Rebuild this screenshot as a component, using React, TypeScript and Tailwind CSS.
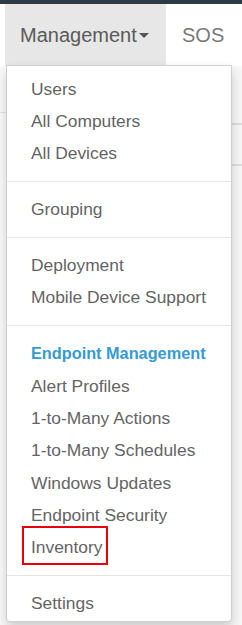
import React from 'react';

type Entry = { label: string; kind?: 'item' | 'header' | 'divider'; marked?: boolean };

const menu: Entry[] = [
  { label: 'Users' },
  { label: 'All Computers' },
  { label: 'All Devices' },
  { label: '', kind: 'divider' },
  { label: 'Grouping' },
  { label: '', kind: 'divider' },
  { label: 'Deployment' },
  { label: 'Mobile Device Support' },
  { label: '', kind: 'divider' },
  { label: 'Endpoint Management', kind: 'header' },
  { label: 'Alert Profiles' },
  { label: '1-to-Many Actions' },
  { label: '1-to-Many Schedules' },
  { label: 'Windows Updates' },
  { label: 'Endpoint Security' },
  { label: 'Inventory', marked: true },
  { label: '', kind: 'divider' },
  { label: 'Settings' },
];

const Caret = () => (
  <svg width="10" height="6" viewBox="0 0 10 6" className="ml-[2px] mt-[2px]">
    <path d="M0 0 L10 0 L5 5 Z" fill="#555" />
  </svg>
);

export default function App() {
  return (
    <div className="relative h-[625px] w-[242px] overflow-hidden bg-white font-['Liberation_Sans',Arial,sans-serif]">
      {/* top strip */}
      <div className="h-[4px] bg-[#2c3a46]" />

      {/* navbar */}
      <div className="flex h-[62px] bg-white">
        <div className="w-[5px]" />
        <div className="flex w-[161px] items-center bg-[#e7e7e7] pl-[15px] text-[20px] text-[#5a5a5a]">
          Management
          <Caret />
        </div>
        <div className="flex items-center pl-[16px] text-[20px] text-[#7a7a7a]">SOS</div>
      </div>

      {/* page content behind the menu */}
      <div className="flex h-[559px]">
        <div className="w-[120px] bg-[#fafafa]">
          <div className="h-[47px] border-b border-[#e3e3e3]" />
        </div>
        <div className="flex-1 bg-[#f7f7f7] pt-[4px]">
          <div className="h-[55px] border-b-2 border-[#dedede]" />
          <div className="h-[41px] border-b-2 border-[#dedede]" />
        </div>
      </div>

      {/* dropdown */}
      <div className="absolute left-[6px] top-[65px] h-[557px] w-[226px] rounded-b-[4px] border border-[#cfcfcf] bg-white pt-[6.5px] shadow-[0_6px_12px_rgba(0,0,0,0.18)]">
        {menu.map((m, i) => {
          if (m.kind === 'divider') {
            return <div key={i} className="my-[11.2px] h-px bg-[#e5e5e5]" />;
          }
          return (
            <div
              key={i}
              className={`relative flex h-[32.4px] items-center pl-[24px] ${
                m.kind === 'header'
                  ? 'text-[16.3px] font-bold text-[#349bd5]'
                  : 'text-[17.4px] text-[#646464]'
              }`}
            >
              {m.label}
              {m.marked && (
                <div className="absolute left-[15px] top-[-5px] h-[39px] w-[86px] border-2 border-[#e8000b]" />
              )}
            </div>
          );
        })}
      </div>
    </div>
  );
}
